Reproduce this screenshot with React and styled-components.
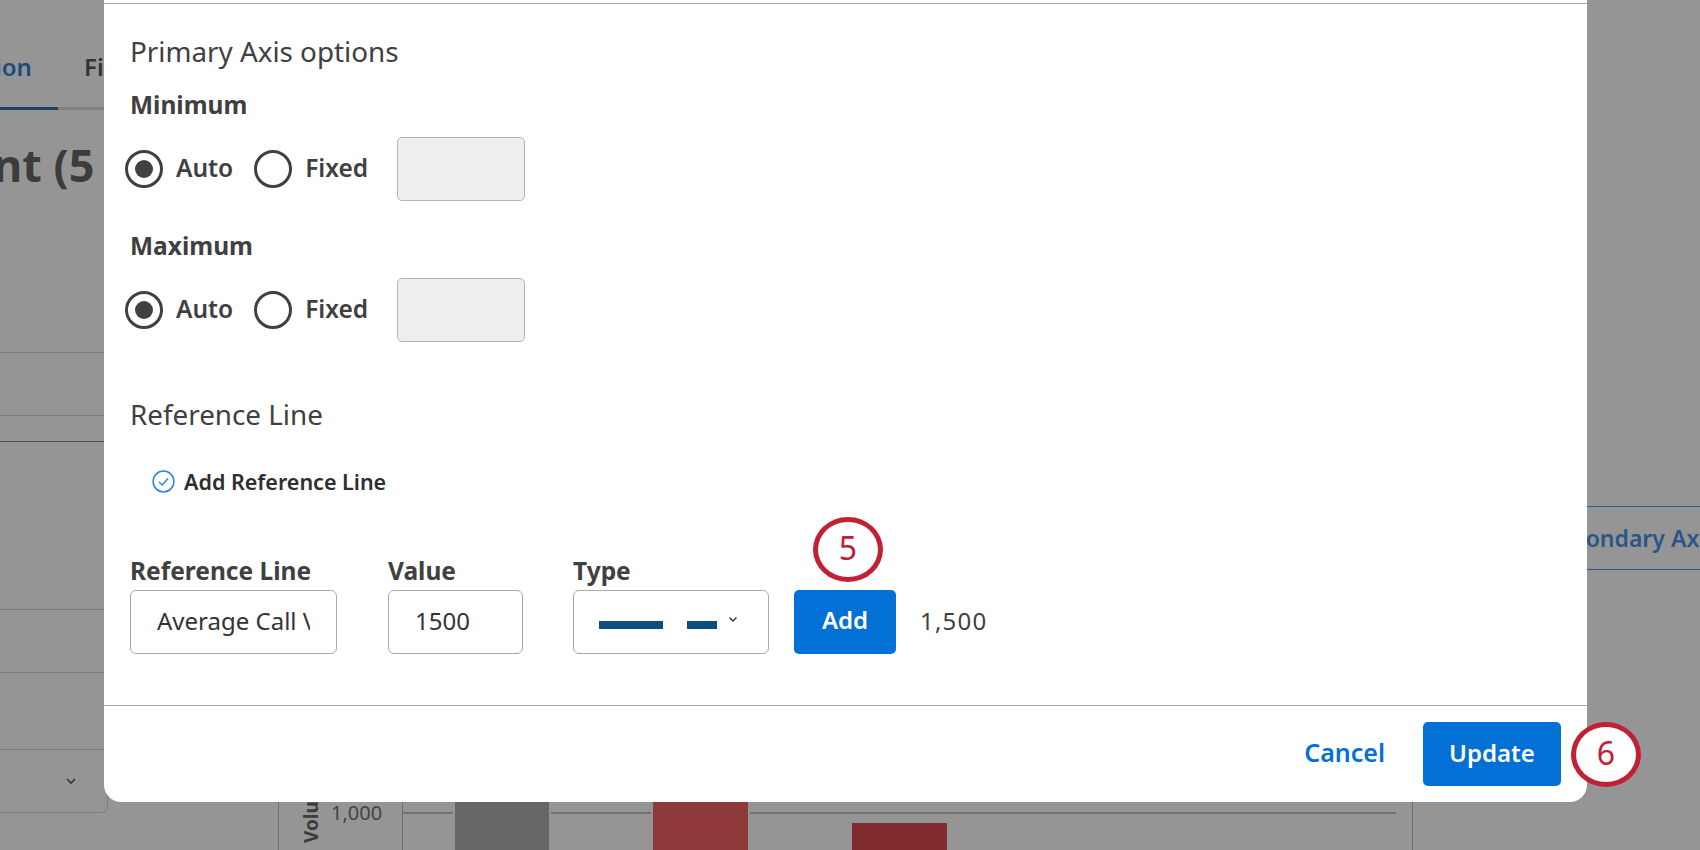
import React from "react";
import styled, { createGlobalStyle } from "styled-components";

const Global = createGlobalStyle`
    html, body {
        margin: 0;
        padding: 0;
        background: #959595;
    }
    * {
        box-sizing: border-box;
    }
`;

export default function App() {
    return (
        <Page>
            <Global />
            <Backdrop>
                <LeftPanel>
                    <Tabs>
                        <ActiveTab>ion</ActiveTab>
                        <Tab>Fi</Tab>
                    </Tabs>
                    <Row $height={243}>
                        <PageTitle>nt (5</PageTitle>
                    </Row>
                    <Row $height={63} />
                    <Row $height={26} $dark />
                    <Row $height={168} />
                    <Row $height={63} />
                    <Row $height={77} />
                    <SelectBox>
                        <svg width="12" height="8" viewBox="0 0 12 8" fill="none" stroke="#333" strokeWidth="1.6">
                            <path d="M2 2l4 4 4-4" />
                        </svg>
                    </SelectBox>
                </LeftPanel>
                <ChartArea>
                    <AxisTitle>Volume</AxisTitle>
                    <AxisValue>1,000</AxisValue>
                    <Plot>
                        <Grid />
                        <Bar $left={52} $width={94} $top={0} $color="#666666" />
                        <Bar $left={250} $width={95} $top={0} $color="#8f3a3a" />
                        <Bar $left={449} $width={95} $top={21} $color="#802c2e" />
                    </Plot>
                </ChartArea>
                <RightPanel>
                    <SideTab>Secondary Axis</SideTab>
                </RightPanel>
            </Backdrop>

            <Modal>
                <ModalTop />
                <ModalBody>
                    <SectionTitle>Primary Axis options</SectionTitle>
                    <FieldLabel>Minimum</FieldLabel>
                    <RadioRow>
                        <Radio $checked />
                        <RadioText>Auto</RadioText>
                        <Radio />
                        <RadioText>Fixed</RadioText>
                        <FixedInput />
                    </RadioRow>
                    <FieldLabel $top={29}>Maximum</FieldLabel>
                    <RadioRow>
                        <Radio $checked />
                        <RadioText>Auto</RadioText>
                        <Radio />
                        <RadioText>Fixed</RadioText>
                        <FixedInput />
                    </RadioRow>
                    <SectionTitle $top={54}>Reference Line</SectionTitle>
                    <CheckRow>
                        <svg width="23" height="23" viewBox="0 0 23 23" fill="none" stroke="#2f86d6" strokeWidth="1.5">
                            <circle cx="11.5" cy="11.5" r="10.4" />
                            <path d="M7 12l3.2 3L16 8.4" />
                        </svg>
                        <CheckText>Add Reference Line</CheckText>
                    </CheckRow>
                    <LineForm>
                        <Field>
                            <FieldName>Reference Line</FieldName>
                            <TextInput $width={207} readOnly value="Average Call Volume" />
                        </Field>
                        <Field>
                            <FieldName>Value</FieldName>
                            <TextInput $width={135} readOnly value="1500" />
                        </Field>
                        <Field>
                            <FieldName>Type</FieldName>
                            <TypeSelect>
                                <Dash $width={64} />
                                <Dash $width={30} />
                                <svg width="10" height="7" viewBox="0 0 10 7" fill="none" stroke="#333" strokeWidth="1.4">
                                    <path d="M1.5 1.5L5 5l3.5-3.5" />
                                </svg>
                            </TypeSelect>
                        </Field>
                        <AddWrap>
                            <ActionButton $width={102} $lift={5}>Add</ActionButton>
                            <Step $top={-73} $left={19}>5</Step>
                        </AddWrap>
                        <LineValue>1,500</LineValue>
                    </LineForm>
                </ModalBody>
                <ModalFooter>
                    <CancelLink>Cancel</CancelLink>
                    <UpdateWrap>
                        <ActionButton $width={138} $lift={3}>Update</ActionButton>
                        <Step $top={0} $left={148}>6</Step>
                    </UpdateWrap>
                </ModalFooter>
            </Modal>
        </Page>
    );
}

const Page = styled.div`
    position: relative;
    width: 1700px;
    height: 850px;
    overflow: hidden;
    background: #959595;
    font-family: "Noto Sans", sans-serif;
    color: #404040;
`;

const Backdrop = styled.div`
    display: flex;
    height: 850px;
`;

const LeftPanel = styled.div`
    width: 279px;
    height: 850px;
    border-right: 1px solid #6e6e6e;
    display: flex;
    flex-direction: column;
`;

const Tabs = styled.div`
    height: 110px;
    flex: none;
    display: flex;
    align-items: stretch;
    gap: 26px;
    border-bottom: 3px solid #808080;
    font-size: 24px;
    font-weight: 600;
`;

const ActiveTab = styled.div`
    width: 58px;
    margin-bottom: -3px;
    padding-top: 50px;
    text-indent: -5px;
    border-bottom: 3px solid #1d3f66;
    color: #1f4a7a;
`;

const Tab = styled.div`
    padding-top: 50px;
    color: #333;
`;

const PageTitle = styled.div`
    padding-top: 25px;
    margin-left: -7px;
    white-space: nowrap;
    font-size: 45px;
    line-height: 60px;
    font-weight: 700;
    color: #3c3c3c;
`;

const Row = styled.div`
    height: ${(p) => p.$height}px;
    flex: none;
    border-bottom: 1px solid ${(p) => (p.$dark ? "#505050" : "#7d7d7d")};
`;

const SelectBox = styled.div`
    width: 108px;
    height: 63px;
    flex: none;
    border-right: 1px solid #7d7d7d;
    border-bottom: 1px solid #7d7d7d;
    border-radius: 0 0 6px 0;
    display: flex;
    align-items: center;
    justify-content: flex-end;
    padding-right: 30px;
`;

const ChartArea = styled.div`
    position: relative;
    width: 1134px;
    height: 850px;
    display: flex;
    border-right: 1px solid #6e6e6e;
    padding-top: 802px;
`;

const AxisTitle = styled.div`
    width: 33px;
    margin-left: 19px;
    height: 48px;
    padding-top: 7px;
    writing-mode: vertical-rl;
    transform: rotate(180deg);
    font-size: 19px;
    line-height: 26px;
    font-weight: 700;
    color: #3c3c3c;
`;

const AxisValue = styled.div`
    width: 71px;
    font-size: 20px;
    line-height: 22px;
    color: #444;
`;

const Plot = styled.div`
    position: relative;
    width: 994px;
    height: 48px;
    border-left: 1px solid #6e6e6e;
`;

const Grid = styled.div`
    position: absolute;
    left: 0;
    right: 0;
    top: 10px;
    border-top: 2px solid #717171;
`;

const Bar = styled.div`
    position: absolute;
    left: ${(p) => p.$left}px;
    width: ${(p) => p.$width}px;
    top: ${(p) => p.$top}px;
    bottom: 0;
    background: ${(p) => p.$color};
    box-shadow: 0 0 0 2px #959595;
`;

const RightPanel = styled.div`
    flex: 1;
    padding-top: 506px;
    overflow: hidden;
`;

const SideTab = styled.div`
    height: 64px;
    padding-left: 135px;
    border-top: 1px solid #2f5a8a;
    border-bottom: 1px solid #2f5a8a;
    display: flex;
    align-items: center;
    white-space: nowrap;
    font-size: 23px;
    font-weight: 600;
    color: #2a5585;
`;

const Modal = styled.div`
    position: absolute;
    left: 104px;
    top: 0;
    width: 1483px;
    height: 802px;
    display: flex;
    flex-direction: column;
    background: #fff;
    border-radius: 0 0 17px 17px;
`;

const ModalTop = styled.div`
    height: 4px;
    flex: none;
    border-bottom: 1px solid #a9a9a9;
`;

const ModalBody = styled.div`
    flex: 1;
    padding: 29px 0 0 26px;
    display: flex;
    flex-direction: column;
    align-items: flex-start;
`;

const SectionTitle = styled.div`
    margin-top: ${(p) => p.$top || 0}px;
    font-size: 27.8px;
    line-height: 36px;
    color: #404040;
`;

const FieldLabel = styled.div`
    margin-top: ${(p) => p.$top || 20}px;
    font-size: 24.5px;
    line-height: 32px;
    font-weight: 700;
    color: #404040;
`;

const RadioRow = styled.div`
    display: flex;
    align-items: center;
    margin-top: 16px;
    margin-left: -5px;
    height: 64px;
`;

const Radio = styled.span`
    width: 38px;
    height: 38px;
    flex: none;
    border-radius: 50%;
    border: 3px solid #404040;
    display: flex;
    align-items: center;
    justify-content: center;

    &::after {
        content: "";
        display: ${(p) => (p.$checked ? "block" : "none")};
        width: 18px;
        height: 18px;
        border-radius: 50%;
        background: #404040;
    }
`;

const RadioText = styled.span`
    margin-left: 13px;
    margin-right: 21px;
    padding-bottom: 4px;
    font-size: 24.5px;
    font-weight: 600;
    color: #404040;
`;

const FixedInput = styled.div`
    width: 128px;
    height: 64px;
    margin-left: 8px;
    background: #eeeeee;
    border: 1px solid #b4b4b4;
    border-radius: 5px;
`;

const CheckRow = styled.div`
    display: flex;
    align-items: center;
    gap: 9px;
    margin-top: 35px;
    margin-left: 22px;
`;

const CheckText = styled.span`
    font-size: 21.5px;
    font-weight: 600;
    color: #2e2e2e;
`;

const LineForm = styled.div`
    display: flex;
    align-items: flex-end;
    margin-top: 59px;
`;

const Field = styled.div`
    display: flex;
    flex-direction: column;
    margin-right: 51px;

    &:nth-child(2) {
        margin-right: 50px;
    }

    &:nth-child(3) {
        margin-right: 25px;
    }
`;

const FieldName = styled.div`
    font-size: 24.5px;
    line-height: 32px;
    font-weight: 700;
    color: #404040;
    margin-bottom: 3px;
`;

const TextInput = styled.input`
    width: ${(p) => p.$width}px;
    height: 64px;
    padding: 0 26px 3px;
    border: 1px solid #a9a9a9;
    border-radius: 6px;
    outline: none;
    font-family: "Noto Sans", sans-serif;
    font-size: 24px;
    color: #333;
    background: #fff;
`;

const TypeSelect = styled.div`
    width: 196px;
    height: 64px;
    display: flex;
    align-items: center;
    gap: 24px;
    padding-left: 25px;
    border: 1px solid #a9a9a9;
    border-radius: 6px;

    svg {
        margin: -6px 0 0 -13px;
    }
`;

const Dash = styled.span`
    width: ${(p) => p.$width}px;
    height: 8px;
    margin-top: 5px;
    background: #0a4f80;
`;

const AddWrap = styled.div`
    position: relative;
`;

const ActionButton = styled.div`
    width: ${(p) => p.$width}px;
    height: 64px;
    padding-bottom: ${(p) => p.$lift}px;
    display: flex;
    align-items: center;
    justify-content: center;
    border-radius: 5px;
    background: #0270d4;
    color: #fff;
    font-size: 24px;
    font-weight: 600;
`;

const Step = styled.div`
    position: absolute;
    top: ${(p) => p.$top}px;
    left: ${(p) => p.$left}px;
    width: 70px;
    height: 65px;
    padding-bottom: 4px;
    display: flex;
    align-items: center;
    justify-content: center;
    border: 5px solid #c02133;
    border-radius: 50%;
    background: #fff;
    color: #c02133;
    font-size: 32px;
`;

const LineValue = styled.div`
    height: 64px;
    line-height: 62px;
    margin-left: 24px;
    font-size: 24px;
    letter-spacing: 1.2px;
    color: #404040;
`;

const ModalFooter = styled.div`
    flex: none;
    height: 97px;
    border-top: 1px solid #a9a9a9;
    display: flex;
    justify-content: flex-end;
    align-items: flex-start;
    padding: 16px 26px 0 0;
`;

const CancelLink = styled.div`
    height: 64px;
    line-height: 61px;
    margin-right: 38px;
    font-size: 25px;
    font-weight: 600;
    color: #0270d4;
`;

const UpdateWrap = styled.div`
    position: relative;
`;
